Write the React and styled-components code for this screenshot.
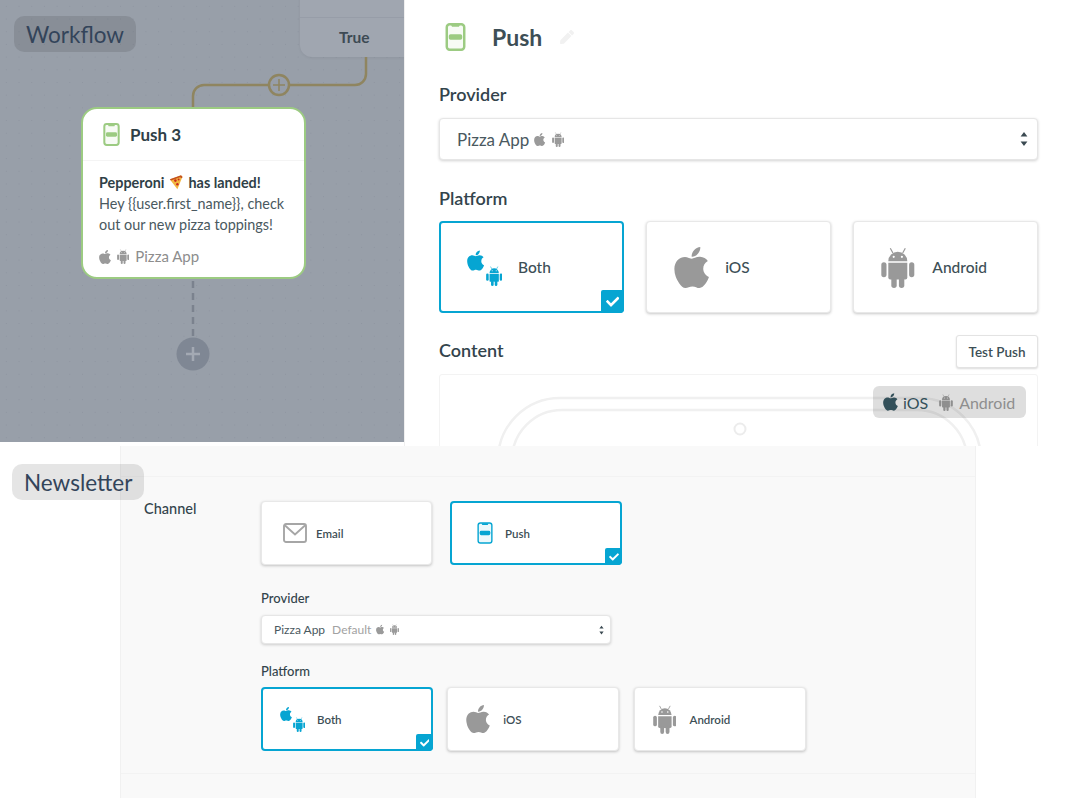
import React from "react"
import styled, { createGlobalStyle } from "styled-components"
import { FaApple, FaCheck, FaPen } from "react-icons/fa"

const GlobalStyle = createGlobalStyle`
  html, body { margin: 0; padding: 0; background: #fff; }
  body { font-family: Lato, "Open Sans", sans-serif; color: #33444c; width: 1072px; height: 798px; overflow: hidden; }
  * { box-sizing: border-box; }
`

const Page = styled.div`
  width: 1072px;
  height: 798px;
  overflow: hidden;
  position: relative;
`
const TopRow = styled.div`
  display: flex;
  height: 446px;
`

/* workflow canvas */
const Canvas = styled.div`
  position: relative;
  width: 404px;
  height: 442px;
  overflow: hidden;
  background-color: #989fa9;
  background-image: radial-gradient(circle, #8e95a0 0.6px, transparent 1px);
  background-size: 12.7px 12.7px;
`
const Tag = styled.div`
  position: absolute;
  left: ${p => p.$x}px;
  top: ${p => p.$y}px;
  height: 36px;
  padding: 0 12px;
  border-radius: 10px;
  display: flex;
  align-items: center;
  font-size: 22.5px;
  color: #33445a;
  background: rgba(0, 0, 0, 0.1);
  z-index: 3;
`
const ConditionCard = styled.div`
  position: absolute;
  left: 300px;
  top: -20px;
  width: 120px;
  height: 77px;
  padding-top: 37px;
  border-radius: 12px;
  background: #a0a6b0;
  box-shadow: 0 1px 3px rgba(0, 0, 0, 0.06);
`
const ConditionRow = styled.div`
  height: 40px;
  border-top: 1px solid #979da8;
  padding: 10px 0 0 39px;
  font-size: 15.5px;
  font-weight: 700;
  color: #3d4a54;
`
const Wires = styled.svg`
  position: absolute;
  left: 0;
  top: 0;
`
const FlowNode = styled.div`
  position: absolute;
  left: 81px;
  top: 107px;
  width: 225px;
  height: 172px;
  background: #fff;
  border: 2px solid #9ccb82;
  border-radius: 16px;
`
const NodeHead = styled.div`
  height: 52px;
  display: flex;
  align-items: center;
  gap: 10px;
  padding-left: 20px;
  border-bottom: 1px solid #f4f4f4;
  font-size: 17px;
  font-weight: 700;
  color: #2f3f47;
`
const NodeBody = styled.div`
  padding: 11px 16px 0;
  font-size: 14.4px;
  line-height: 21px;
  color: #4a5960;
`
const NodeTitle = styled.div`
  display: flex;
  align-items: center;
  gap: 5px;
  font-weight: 700;
  color: #2f3f47;
`
const NodeFoot = styled.div`
  margin-top: 11px;
  display: flex;
  align-items: center;
  gap: 6px;
  color: #8d8d8d;
  font-size: 15px;
`

/* push settings panel */
const Settings = styled.div`
  flex: 1;
  position: relative;
  overflow: hidden;
  padding: 23px 34px 0 35px;
  background: #fff;
  box-shadow: inset 1px 0 0 #efefef;
`
const TitleRow = styled.div`
  display: flex;
  align-items: center;
  height: 28px;
  padding-left: 6px;
  gap: 26px;
  font-size: 23px;
  font-weight: 700;
  color: #3d4f56;
`
const SectionLabel = styled.div`
  font-size: ${p => p.$small ? 13 : 18}px;
  font-weight: ${p => p.$small ? 500 : 600};
  line-height: ${p => p.$small ? 16 : 22}px;
  color: #33444c;
  margin: ${p => p.$top}px 0 ${p => p.$bottom}px;
`
const SelectBox = styled.div`
  height: ${p => p.$small ? 29 : 42}px;
  width: ${p => p.$small ? "350px" : "100%"};
  display: flex;
  align-items: center;
  gap: 5px;
  padding: 0 ${p => p.$small ? 6 : 9}px 0 ${p => p.$small ? 12 : 17}px;
  background: #fff;
  border: 1px solid #e6e6e6;
  border-radius: 4px;
  box-shadow: 0 1px 3px rgba(0, 0, 0, 0.18);
  font-size: ${p => p.$small ? 12 : 17}px;
  color: #4a5960;
`
const Muted = styled.span`
  color: #a2a2a2;
  margin-left: 2px;
`
const Chevrons = styled.svg`
  margin-left: auto;
`
const CardRow = styled.div`
  display: flex;
  gap: ${p => p.$gap}px;
`
const Card = styled.div`
  position: relative;
  width: ${p => p.$w}px;
  height: ${p => p.$h}px;
  display: flex;
  align-items: center;
  padding-left: ${p => p.$selected ? p.$pad - 1 : p.$pad}px;
  background: #fff;
  border: ${p => p.$selected ? "2px solid #06a5d2" : "1px solid #e8e8e8"};
  border-radius: 4px;
  box-shadow: ${p => p.$selected ? "none" : "0 1px 3px rgba(0, 0, 0, 0.22)"};
`
const IconSlot = styled.div`
  width: ${p => p.$w}px;
  display: flex;
  align-items: center;
  color: #999;
`
const CardLabel = styled.span`
  font-size: ${p => p.$small ? 11.5 : 15.5}px;
  font-weight: ${p => p.$small ? 600 : 500};
  color: #3d4f56;
`
const Corner = styled.div`
  position: absolute;
  right: -2px;
  bottom: -2px;
  width: ${p => p.$size}px;
  height: ${p => p.$size}px;
  display: flex;
  align-items: center;
  justify-content: center;
  background: #06a5d2;
  color: #fff;
  border-radius: 2px 0 4px 0;
`
const BothStack = styled.div`
  display: flex;
  flex-direction: column;
  align-items: flex-start;
  width: ${p => p.$w}px;
  color: #06a5d2;
`
const AndroidOffset = styled.div`
  display: flex;
  margin: ${p => p.$top}px 0 0 ${p => p.$left}px;
`
const ContentHead = styled.div`
  display: flex;
  align-items: center;
  justify-content: space-between;
  margin-top: 22px;
  height: 33px;
`
const TestButton = styled.button`
  width: 82px;
  height: 33px;
  padding: 0;
  background: #fff;
  border: 1px solid #e3e3e3;
  border-radius: 3px;
  box-shadow: 0 1px 2px rgba(0, 0, 0, 0.14);
  font-family: inherit;
  font-size: 13.5px;
  font-weight: 600;
  color: #3d4f56;
`
const Preview = styled.div`
  position: relative;
  margin-top: 6px;
  height: 80px;
  border: 1px solid #f3f3f3;
  border-radius: 3px;
`
const PhoneOutline = styled.svg`
  position: absolute;
  left: 0;
  top: 0;
`
const OsToggle = styled.div`
  position: absolute;
  right: 11px;
  top: 11px;
  width: 153px;
  height: 32px;
  display: flex;
  align-items: center;
  gap: 5px;
  padding-left: 10px;
  border-radius: 6px;
  background: rgba(0, 0, 0, 0.13);
  font-size: 16px;
  color: #33505a;
`
const OsOff = styled.span`
  display: flex;
  align-items: center;
  gap: 6px;
  margin-left: 6px;
  color: #8e8e8e;
`
const OsGroup = styled.span`
  display: inline-flex;
  align-items: center;
  gap: ${p => p.$gap}px;
  color: #9a9a9a;
`

/* newsletter panel */
const Newsletter = styled.div`
  width: 854px;
  height: 352px;
  margin-left: 121px;
  background: #f9f9f9;
  box-shadow: -1px 0 0 #f1f1f1, 1px 0 0 #f1f1f1;
`
const PanelHead = styled.div`
  height: 31px;
  border-bottom: 1px solid #f3f3f3;
`
const PanelBody = styled.div`
  display: flex;
  padding: 24px 0 0 23px;
  height: 297px;
  border-bottom: 1px solid #f3f3f3;
`
const SideLabel = styled.div`
  width: 117px;
  font-size: 14.5px;
  font-weight: 500;
  line-height: 16px;
  color: #33444c;
`

const PhoneIcon = ({ color, w = 18, h = 25, stroke = 2.2 }) => (
  <svg width={w} height={h} viewBox="0 0 18 25" style={{ flex: "none" }}>
    <rect x="1.2" y="1.2" width="15.6" height="22.6" rx="2.6" fill={color} fillOpacity="0.08" stroke={color} strokeWidth={stroke} />
    <path d="M5 1.5h8l-.9 1.9H5.9z" fill={color} />
    <rect x="3" y="10" width="12" height="5" rx="1.6" fill={color} />
  </svg>
)

const MailIcon = () => (
  <svg width="24" height="20" viewBox="0 0 24 20">
    <rect x="1" y="1" width="22" height="18" rx="2" fill="none" stroke="#a6a6a6" strokeWidth="1.9" />
    <path d="M1.5 2l10.5 9.5L22.5 2" fill="none" stroke="#a6a6a6" strokeWidth="1.9" />
  </svg>
)

const PizzaSlice = () => (
  <svg width="14" height="15" viewBox="0 0 14 15">
    <path d="M1 4.5L12 .6l1.4 1.2-5 12.4z" fill="#f2b640" />
    <path d="M.8 4.2L12 .2l1.6 1.7-.8 1.4L11 2.2 2 5.4z" fill="#c4511c" />
    <circle cx="6.4" cy="5.6" r="1.3" fill="#c9291d" />
    <circle cx="9.6" cy="4.6" r="1" fill="#c9291d" />
    <circle cx="8.4" cy="9.2" r="1.2" fill="#c9291d" />
  </svg>
)

const Updown = ({ size }) => (
  <Chevrons width={size} height={size * 2} viewBox="0 0 8 16">
    <path d="M4 1l3.4 4.6H.6zM4 15L.6 10.4h6.8z" fill="#3b4a52" />
  </Chevrons>
)

// FaApple's box is square, narrow it so the glyph starts where the slot starts
const Apple = ({ size }) => (
  <FaApple style={{ width: size * 0.75, height: size, flex: "none" }} />
)

// robot with the gap between head and body
const Android = ({ h, w = h * 0.82 }) => (
  <svg width={w} height={h} viewBox="0 0 33 41" fill="currentColor" style={{ flex: "none" }}>
    <path d="M7 14.2a9.5 9.5 0 0 1 19 0z" />
    <path d="M11.6 6L9 1.2M21.4 6L24 1.2" stroke="currentColor" strokeWidth="1.2" />
    <path d="M7 15.8h19v14.7a2 2 0 0 1-2 2H9a2 2 0 0 1-2-2z" />
    <rect x="0" y="15.2" width="5.2" height="15" rx="2.6" />
    <rect x="27.8" y="15.2" width="5.2" height="15" rx="2.6" />
    <rect x="10" y="30" width="5.4" height="11" rx="2.7" />
    <rect x="17.6" y="30" width="5.4" height="11" rx="2.7" />
    <circle cx="12.4" cy="9.8" r="1.1" fill="#fff" />
    <circle cx="20.6" cy="9.8" r="1.1" fill="#fff" />
  </svg>
)

const OsPair = ({ apple, android, gap = 6 }) => (
  <OsGroup $gap={gap}>
    <Apple size={apple} />
    <Android h={android} />
  </OsGroup>
)

const PlatformCards = ({ w, h, gap, pad, slot, small, appleBig, androidBig, both, check }) => (
  <CardRow $gap={gap}>
    <Card $w={w} $h={h} $pad={pad} $selected>
      <BothStack $w={slot}>
        <Apple size={both.apple} />
        <AndroidOffset $top={both.top} $left={both.left}><Android h={both.android} /></AndroidOffset>
      </BothStack>
      <CardLabel $small={small}>Both</CardLabel>
      <Corner $size={check}><FaCheck size={check * 0.58} /></Corner>
    </Card>
    <Card $w={w} $h={h} $pad={pad}>
      <IconSlot $w={slot}><Apple size={appleBig} /></IconSlot>
      <CardLabel $small={small}>iOS</CardLabel>
    </Card>
    <Card $w={w} $h={h} $pad={pad}>
      <IconSlot $w={slot}><Android h={androidBig} /></IconSlot>
      <CardLabel $small={small}>Android</CardLabel>
    </Card>
  </CardRow>
)

const App = () => {
  return (
    <Page>
      <GlobalStyle />
      <TopRow>
        <Canvas>
          <Tag $x={14} $y={16}>Workflow</Tag>
          <ConditionCard>
            <ConditionRow>True</ConditionRow>
          </ConditionCard>
          <Wires width="404" height="442" viewBox="0 0 404 442">
            <path d="M366 57v17a11 11 0 0 1-11 11H204a11 11 0 0 0-11 11v12" fill="none" stroke="#8f8560" strokeWidth="2.5" />
            <circle cx="279" cy="85" r="10" fill="#979ea9" stroke="#8f8560" strokeWidth="2.5" />
            <path d="M279 79v12M273 85h12" stroke="#8f8560" strokeWidth="1.5" />
            <path d="M193 281v57" stroke="#7b828e" strokeWidth="2.5" strokeDasharray="7 5" />
            <circle cx="193" cy="354" r="16.5" fill="#7f8794" />
            <path d="M193 347v14M186 354h14" stroke="#a3a9b3" strokeWidth="2.5" />
          </Wires>
          <FlowNode>
            <NodeHead>
              <PhoneIcon color="#9ccb82" w={17} h={23} />
              Push 3
            </NodeHead>
            <NodeBody>
              <NodeTitle>Pepperoni <PizzaSlice /> has landed!</NodeTitle>
              Hey {"{{user.first_name}}"}, check<br />
              out our new pizza toppings!
              <NodeFoot><OsPair apple={16} android={15} gap={6} /> Pizza App</NodeFoot>
            </NodeBody>
          </FlowNode>
        </Canvas>
        <Settings>
          <TitleRow>
            <PhoneIcon color="#9ccb82" w={21} h={28} />
            Push
            <FaPen size={14} color="#f1f1f1" style={{ marginLeft: -8 }} />
          </TitleRow>
          <SectionLabel $top={32} $bottom={13}>Provider</SectionLabel>
          <SelectBox>
            Pizza App <OsPair apple={15} android={15} />
            <Updown size={8} />
          </SelectBox>
          <SectionLabel $top={27} $bottom={12}>Platform</SectionLabel>
          <PlatformCards
            w={185} h={92} gap={22.5} pad={27} slot={51}
            appleBig={47} androidBig={41}
            both={{ apple: 23, android: 20, top: -6, left: 19 }}
            check={23}
          />
          <ContentHead>
            <SectionLabel $top={0} $bottom={4}>Content</SectionLabel>
            <TestButton>Test Push</TestButton>
          </ContentHead>
          <Preview>
            <PhoneOutline width="598" height="80" viewBox="0 0 598 80">
              <rect x="58" y="23" width="483" height="140" rx="62" fill="none" stroke="#f0f0f0" strokeWidth="2.5" />
              <rect x="72" y="35" width="455" height="120" rx="50" fill="none" stroke="#f0f0f0" strokeWidth="2.5" />
              <circle cx="300" cy="54" r="5.5" fill="none" stroke="#ececec" strokeWidth="2" />
            </PhoneOutline>
            <OsToggle>
              <Apple size={20} /> iOS
              <OsOff><Android h={17} /> Android</OsOff>
            </OsToggle>
          </Preview>
        </Settings>
      </TopRow>

      <Tag $x={12} $y={464}>Newsletter</Tag>
      <Newsletter>
        <PanelHead />
        <PanelBody>
          <SideLabel>Channel</SideLabel>
          <div>
            <CardRow $gap={18}>
              <Card $w={171} $h={64} $pad={21}>
                <IconSlot $w={33}><MailIcon /></IconSlot>
                <CardLabel $small>Email</CardLabel>
              </Card>
              <Card $w={172} $h={64} $pad={26} $selected>
                <IconSlot $w={28}><PhoneIcon color="#06a5d2" w={16} h={22} stroke={1.6} /></IconSlot>
                <CardLabel $small>Push</CardLabel>
                <Corner $size={17}><FaCheck size={10} /></Corner>
              </Card>
            </CardRow>
            <SectionLabel $small $top={25} $bottom={9}>Provider</SectionLabel>
            <SelectBox $small>
              Pizza App <Muted>Default</Muted> <OsPair apple={11} android={11} gap={5} />
              <Updown size={5} />
            </SelectBox>
            <SectionLabel $small $top={19} $bottom={8}>Platform</SectionLabel>
            <PlatformCards
              w={172} h={64} gap={14.25} pad={18} slot={37} small
              appleBig={32} androidBig={29}
              both={{ apple: 16, android: 15, top: -5, left: 13 }}
              check={17}
            />
          </div>
        </PanelBody>
      </Newsletter>
    </Page>
  )
}

export default App
